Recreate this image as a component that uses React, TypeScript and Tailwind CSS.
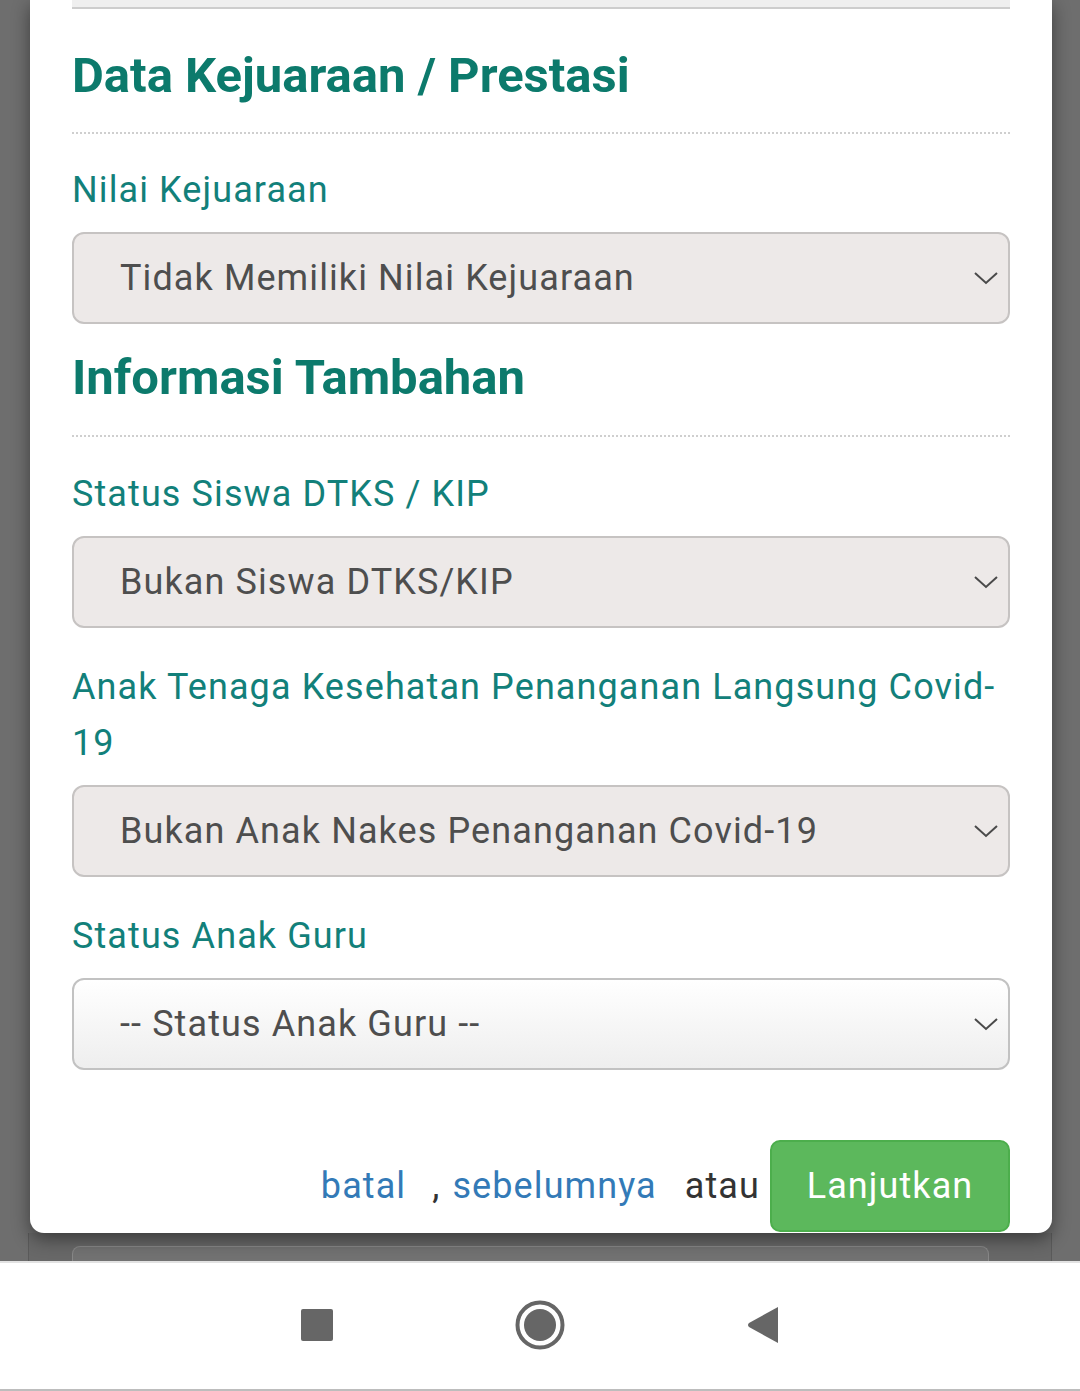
import React from "react";

const fontStack = { fontFamily: "Roboto, 'Noto Sans', 'Liberation Sans', sans-serif" };

function Chevron() {
  return (
    <svg className="absolute right-[9px] top-1/2 -translate-y-1/2" width="26" height="16" viewBox="0 0 26 16" fill="none">
      <path d="M2 3 L13 13 L24 3" stroke="#4a4a4a" strokeWidth="2" />
    </svg>
  );
}

function SelectBox({ value, plain = false }: { value: string; plain?: boolean }) {
  return (
    <div
      className={
        plain
          ? "relative flex h-[92px] items-center rounded-[12px] border-2 border-[#c2c2c2] bg-gradient-to-b from-white to-[#eeeeee] pl-[46px] text-[36px] tracking-[1.1px] text-[#4e4e4e]"
          : "relative flex h-[92px] items-center rounded-[12px] border-2 border-[#c6c3c2] bg-[#ede9e8] pl-[46px] text-[36px] tracking-[1.1px] text-[#4e4e4e]"
      }
    >
      <span>{value}</span>
      <Chevron />
    </div>
  );
}

function Label({ children, className = "mt-[31px]" }: { children: React.ReactNode; className?: string }) {
  return (
    <p className={`${className} mb-[14px] text-[36px] leading-[56px] tracking-[1.1px] text-[#12807a]`}>{children}</p>
  );
}

function Heading({ children, className = "" }: { children: React.ReactNode; className?: string }) {
  return (
    <h3 className={`text-[49px] font-bold leading-[55px] text-[#0c7a6c] ${className}`}>{children}</h3>
  );
}

export default function App() {
  return (
    <div className="flex h-[1391px] w-[1080px] flex-col overflow-hidden bg-[#6e6e6e]" style={fontStack}>
      <div className="flex h-[1261px] flex-col">
        <div className="relative z-10 ml-[30px] w-[1022px] rounded-b-[14px] bg-white px-[42px] pb-px shadow-[0_6px_18px_rgba(0,0,0,0.45)]">
          <div className="h-[9px] border-b-2 border-[#cdcdcd] bg-[#efefef]" />

          <Heading className="mt-[39px]">Data Kejuaraan / Prestasi</Heading>
          <div className="mt-[29px] border-t-2 border-dotted border-[#cfcfcf]" />

          <Label className="mt-[28px]">Nilai Kejuaraan</Label>
          <SelectBox value="Tidak Memiliki Nilai Kejuaraan" />

          <Heading className="mt-[26px]">Informasi Tambahan</Heading>
          <div className="mt-[30px] border-t-2 border-dotted border-[#cfcfcf]" />

          <Label className="mt-[29px]">Status Siswa DTKS / KIP</Label>
          <SelectBox value="Bukan Siswa DTKS/KIP" />

          <Label>Anak Tenaga Kesehatan Penanganan Langsung Covid-19</Label>
          <SelectBox value="Bukan Anak Nakes Penanganan Covid-19" />

          <Label>Status Anak Guru</Label>
          <SelectBox value="-- Status Anak Guru --" plain />

          <div className="mt-[70px] flex items-center justify-end text-[36px] tracking-[1.1px]">
            <a className="text-[#337ab7]">batal</a>
            <span className="ml-[26px] text-[#333333]">,</span>
            <a className="ml-[12px] text-[#337ab7]">sebelumnya</a>
            <span className="ml-[28px] text-[#333333]">atau</span>
            <button
              type="button"
              className="ml-[10px] h-[92px] w-[240px] rounded-[10px] border-2 border-[#4cae4c] bg-[#5cb85c] text-[36px] tracking-[1.1px] text-white"
            >
              Lanjutkan
            </button>
          </div>
        </div>

        <div className="mx-[28px] flex flex-1 flex-col border-x border-[#5a5a5a] bg-[#686868]">
          <div className="ml-[43px] mr-[62px] mt-[13px] flex-1 rounded-t-[8px] border-x border-t border-[#888888] bg-[#727272]" />
        </div>
      </div>

      <div className="flex h-[130px] items-center justify-center border-t-2 border-[#e2e2e2] border-b-2 border-b-[#bdbdbd] bg-white">
        <div className="flex w-[478px] items-center justify-between pb-[2px]">
          <div className="h-[32px] w-[32px] rounded-[2px] bg-[#666666]" />
          <svg width="50" height="50" viewBox="0 0 50 50">
            <circle cx="25" cy="25" r="22.5" fill="none" stroke="#666666" strokeWidth="4" />
            <circle cx="25" cy="25" r="16" fill="#666666" />
          </svg>
          <svg width="32" height="38" viewBox="0 0 32 38">
            <path d="M31 1 L31 37 L2 21 Q0 19 2 17 Z" fill="#666666" />
          </svg>
        </div>
      </div>
    </div>
  );
}
